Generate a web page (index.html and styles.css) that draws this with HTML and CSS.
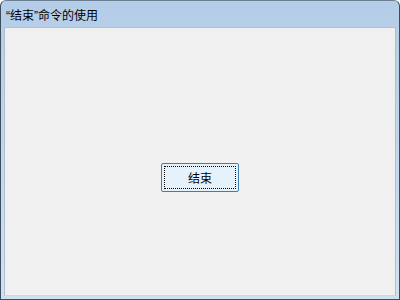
FILE: index.html
```html
<!DOCTYPE html>
<html lang="zh-CN">
<head>
    <meta charset="UTF-8">
    <title>“结束”命令的使用</title>
    <link rel="stylesheet" href="styles.css">
</head>
<body>
    <div class="window">
        <div class="titlebar">“结束”命令的使用</div>
        <div class="client">
            <button class="btn">结束</button>
        </div>
    </div>
</body>
</html>
```
FILE: styles.css
```css
* {
    margin: 0;
    padding: 0;
    box-sizing: border-box;
}
body {
    width: 400px;
    height: 300px;
    font-family: "Liberation Sans", "Noto Sans CJK SC", sans-serif;
    background: #ffffff;
}
.window {
    width: 400px;
    height: 300px;
    display: flex;
    flex-direction: column;
    border: 1px solid #3c4d5e;
    border-top-color: #6d7f92;
    border-radius: 6px 6px 0 0;
    background: linear-gradient(to bottom, #b4cde8 0%, #c2d7ed 50%, #d0e1f2 100%);
    padding: 0 3px 3px 3px;
    overflow: hidden;
}
.titlebar {
    height: 26px;
    display: flex;
    align-items: center;
    padding-left: 2px;
    font-size: 12px;
    color: #000000;
}
.client {
    flex: 1;
    background: #f0f0f0;
    border: 1px solid #aebfd2;
    border-bottom-color: #c9d8e8;
    display: flex;
    align-items: center;
    justify-content: center;
    padding-top: 32px;
}
.btn {
    width: 78px;
    height: 29px;
    font-family: "Noto Sans CJK SC", sans-serif;
    font-size: 12px;
    color: #000000;
    background: #e5f1fb;
    border: 1px solid #3c7fb1;
    border-radius: 2px;
    outline: 1px dotted #000000;
    outline-offset: -4px;
}
```
